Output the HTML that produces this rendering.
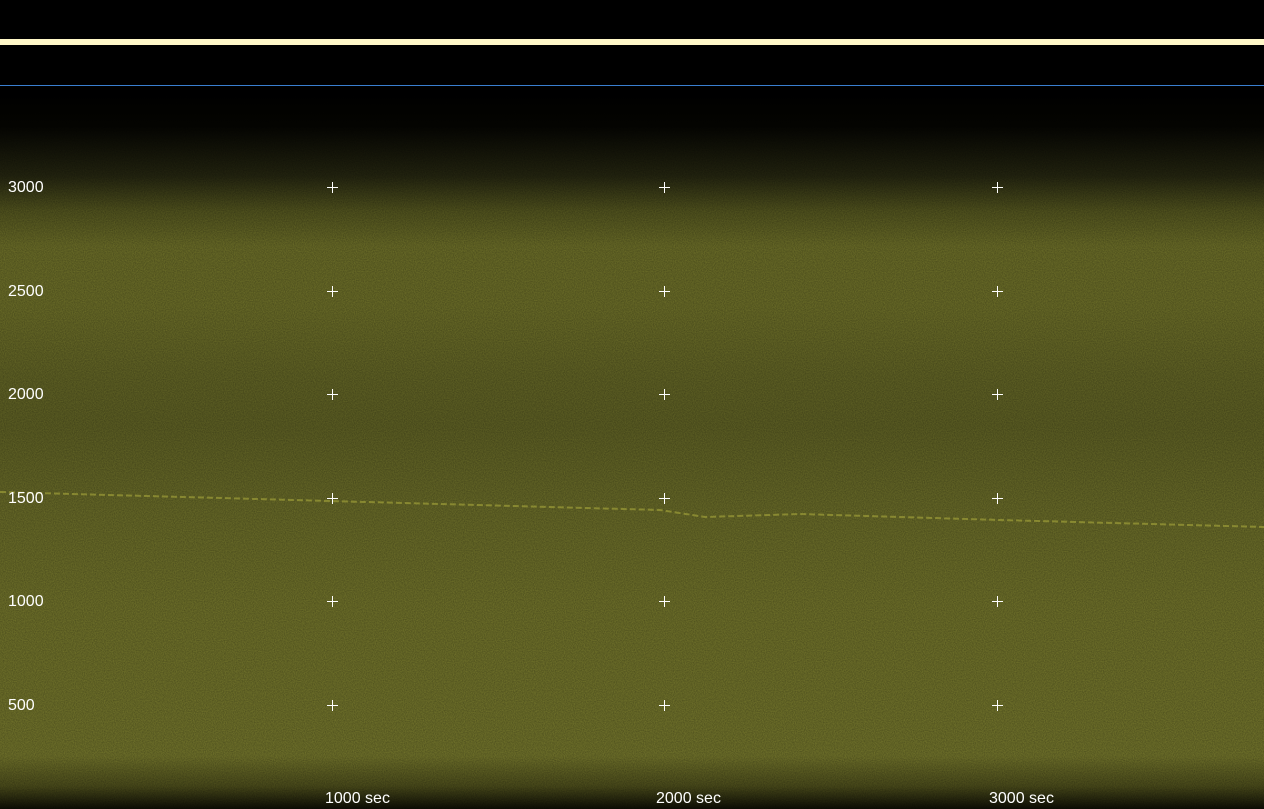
<!DOCTYPE html><html><head><style>
body{margin:0;width:1264px;height:809px;overflow:hidden;background:#000;font-family:"Liberation Sans",sans-serif}
#sp{position:absolute;left:0;top:86px;width:1264px;height:723px;background:linear-gradient(to bottom,#000 0px,#050502 40px,#242510 90px,#50521e 125px,#686a27 160px,#686a27 220px,#5e6024 290px,#5b5d23 340px,#656727 420px,#6c6e29 520px,#6e702a 670px,#4a4b1b 700px,#0e0e05 723px)}
.l{position:absolute;color:#fff;font-size:16px}
.c{position:absolute;width:11px;height:11px}
.c:before{content:"";position:absolute;left:5px;top:0;width:1px;height:11px;background:#fff}
.c:after{content:"";position:absolute;top:5px;left:0;height:1px;width:11px;background:#fff}
</style></head><body>
<div style="position:absolute;left:0;top:39px;width:1264px;height:6px;background:#fff8c8"></div>
<div style="position:absolute;left:0;top:85px;width:1264px;height:1px;background:#3a7fd0"></div>
<div id="sp"></div>
<svg style="position:absolute;left:0;top:86px" width="1264" height="723">
<filter id="n"><feTurbulence type="fractalNoise" baseFrequency="0.9" numOctaves="2" seed="3"/><feColorMatrix values="0 0 0 0 0  0 0 0 0 0  0 0 0 0 0  0 0 0 -1.4 1.1"/></filter>
<rect width="1264" height="723" filter="url(#n)" opacity="0.3"/>
<polyline points="0,406 330,415 660,424 705,431 800,428 1000,434 1264,441" fill="none" stroke="#a8a83c" stroke-width="2" stroke-dasharray="6 3" opacity="0.6"/>
</svg>
<div class="l" style="left:8px;top:179px">3000</div>
<div class="l" style="left:8px;top:283px">2500</div>
<div class="l" style="left:8px;top:386px">2000</div>
<div class="l" style="left:8px;top:490px">1500</div>
<div class="l" style="left:8px;top:593px">1000</div>
<div class="l" style="left:8px;top:697px">500</div>
<div class="l" style="left:325px;top:790px">1000 sec</div>
<div class="l" style="left:656px;top:790px">2000 sec</div>
<div class="l" style="left:989px;top:790px">3000 sec</div>
<div class="c" style="left:327px;top:182px"></div><div class="c" style="left:659px;top:182px"></div><div class="c" style="left:992px;top:182px"></div>
<div class="c" style="left:327px;top:286px"></div><div class="c" style="left:659px;top:286px"></div><div class="c" style="left:992px;top:286px"></div>
<div class="c" style="left:327px;top:389px"></div><div class="c" style="left:659px;top:389px"></div><div class="c" style="left:992px;top:389px"></div>
<div class="c" style="left:327px;top:493px"></div><div class="c" style="left:659px;top:493px"></div><div class="c" style="left:992px;top:493px"></div>
<div class="c" style="left:327px;top:596px"></div><div class="c" style="left:659px;top:596px"></div><div class="c" style="left:992px;top:596px"></div>
<div class="c" style="left:327px;top:700px"></div><div class="c" style="left:659px;top:700px"></div><div class="c" style="left:992px;top:700px"></div>
</body></html>
